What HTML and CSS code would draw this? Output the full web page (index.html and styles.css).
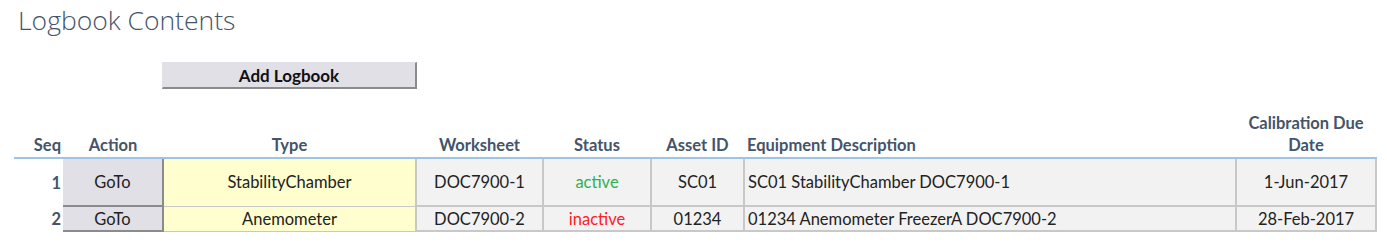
FILE: index.html
```html
<!DOCTYPE html>
<html>
<head>
<meta charset="utf-8">
<link rel="stylesheet" href="styles.css">
</head>
<body>
<h1 class="title">Logbook Contents</h1>
<div class="toolbar"><button class="add-btn">Add Logbook</button></div>
<table class="grid">
  <colgroup>
    <col class="c-seq"><col class="c-act"><col class="c-type"><col class="c-ws"><col class="c-st"><col class="c-asset"><col class="c-desc"><col class="c-cal">
  </colgroup>
  <thead>
    <tr>
      <th class="num">Seq</th>
      <th>Action</th>
      <th>Type</th>
      <th>Worksheet</th>
      <th>Status</th>
      <th>Asset ID</th>
      <th class="left">Equipment Description</th>
      <th>Calibration Due<br>Date</th>
    </tr>
  </thead>
  <tbody>
    <tr class="r1">
      <td class="seq">1</td>
      <td class="act">GoTo</td>
      <td class="type">StabilityChamber</td>
      <td class="cell">DOC7900-1</td>
      <td class="cell active">active</td>
      <td class="cell">SC01</td>
      <td class="cell left">SC01 StabilityChamber DOC7900-1</td>
      <td class="cell">1-Jun-2017</td>
    </tr>
    <tr class="r2">
      <td class="seq">2</td>
      <td class="act">GoTo</td>
      <td class="type">Anemometer</td>
      <td class="cell">DOC7900-2</td>
      <td class="cell inactive">inactive</td>
      <td class="cell">01234</td>
      <td class="cell left">01234 Anemometer FreezerA DOC7900-2</td>
      <td class="cell">28-Feb-2017</td>
    </tr>
  </tbody>
</table>
</body>
</html>
```

FILE: styles.css
```css
html, body {
  margin: 0;
  padding: 0;
  background: #ffffff;
}
body {
  font-family: Lato, "Open Sans", sans-serif;
  color: #222;
}
.title {
  margin: 0;
  padding: 4px 0 0 18px;
  height: 32px;
  font-family: "Open Sans", sans-serif;
  font-weight: 300;
  font-size: 26.5px;
  line-height: 32px;
  color: #44546a;
}
.toolbar {
  padding: 26px 0 0 162px;
  height: 27px;
}
.add-btn {
  display: block;
  box-sizing: border-box;
  width: 255px;
  height: 27px;
  margin: 0;
  padding: 0;
  background: #e1e0e6;
  border: 1px solid #e1e0e6;
  border-right: 2px solid #8b8b8b;
  border-bottom: 2px solid #8b8b8b;
  font-family: Lato, sans-serif;
  font-weight: 700;
  font-size: 17px;
  color: #111;
}
.grid {
  margin: 23px 0 0 14px;
  border-collapse: collapse;
  table-layout: fixed;
  width: 1362px;
  font-size: 16.5px;
}
.c-seq { width: 49px; }
.c-act { width: 100px; }
.c-type { width: 253px; }
.c-ws { width: 127px; }
.c-st { width: 108px; }
.c-asset { width: 93px; }
.c-desc { width: 492px; }
.c-cal { width: 140px; }
.grid th {
  height: 42px;
  padding: 0 0 1px;
  vertical-align: bottom;
  text-align: center;
  font-weight: 700;
  font-size: 16.5px;
  color: #44546a;
  line-height: 22px;
  border-bottom: 2px solid #9dc3e6;
}
.grid th.num { text-align: right; padding-right: 2px; }
.grid th.left, .grid td.left { text-align: left; padding-left: 3px; }
.grid td {
  padding: 0;
  text-align: center;
}
.r1 td { height: 46px; }
.r2 td { height: 23px; }
.seq {
  text-align: right !important;
  padding-right: 2px !important;
  font-weight: 700;
  color: #44546a;
}
.act {
  background: #e1e0e6;
  border-right: 2px solid #8b8b8b;
  border-bottom: 2px solid #8b8b8b;
}
.type {
  background: #fefecf;
  border: 1px solid #c8c8c8;
  border-left: none;
}
.cell {
  background: #f2f2f2;
  border: 2px solid #c8c8c8;
  border-top: none;
}
.r1 .cell, .r1 .type { border-top: none; }
.active { color: #2fb050; }
.inactive { color: #ff2020; }
```
